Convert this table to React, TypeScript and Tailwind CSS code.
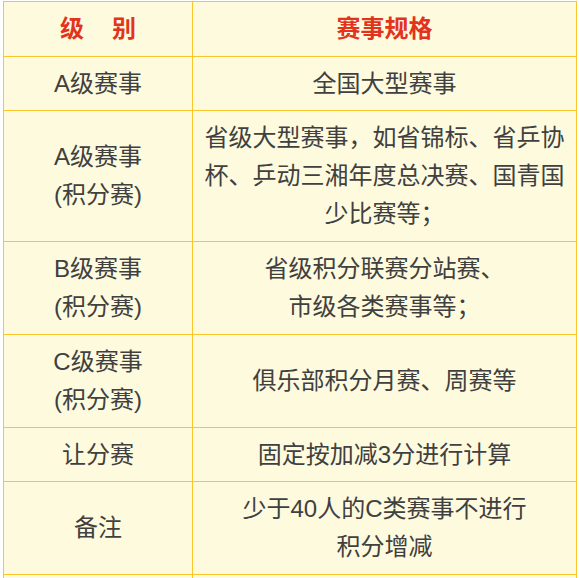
import type { ReactNode } from "react";

interface Row {
  level: ReactNode;
  spec: ReactNode;
  h: string;
}

const ROWS: Row[] = [
  { level: "A级赛事", spec: "全国大型赛事", h: "h-[54px]" },
  {
    level: <>A级赛事<br />(积分赛)</>,
    spec: "省级大型赛事，如省锦标、省乒协杯、乒动三湘年度总决赛、国青国少比赛等；",
    h: "h-[131px]",
  },
  {
    level: <>B级赛事<br />(积分赛)</>,
    spec: <>省级积分联赛分站赛、<br />市级各类赛事等；</>,
    h: "h-[93px]",
  },
  {
    level: <>C级赛事<br />(积分赛)</>,
    spec: "俱乐部积分月赛、周赛等",
    h: "h-[93px]",
  },
  { level: "让分赛", spec: "固定按加减3分进行计算", h: "h-[54px]" },
  { level: "备注", spec: <>少于40人的C类赛事不进行<br />积分增减</>, h: "h-[93px]" },
];

const cell = "border border-[#fcc52a] px-2 py-0 text-center align-middle";

export default function App() {
  return (
    <div
      className="h-[578px] w-[579px] overflow-hidden bg-white"
      style={{ fontFamily: '"Liberation Sans", "Noto Sans CJK SC", sans-serif' }}
    >
      <table className="ml-[3px] mt-[1px] w-[574px] table-fixed border-collapse bg-[#fefade] text-[24px] leading-[38px] text-[#404040]">
        <colgroup>
          <col className="w-[189px]" />
          <col />
        </colgroup>
        <thead>
          <tr className="h-[55px]">
            <th className={`${cell} font-bold text-[#e2341c]`}>
              级<span className="inline-block w-[28px]" />别
            </th>
            <th className={`${cell} font-bold text-[#e2341c]`}>赛事规格</th>
          </tr>
        </thead>
        <tbody>
          {ROWS.map((r, i) => (
            <tr key={i} className={r.h}>
              <td className={cell}>{r.level}</td>
              <td className={cell}>{r.spec}</td>
            </tr>
          ))}
          <tr className="h-[54px]">
            <td className={cell}>&nbsp;</td>
            <td className={cell}>&nbsp;</td>
          </tr>
        </tbody>
      </table>
    </div>
  );
}
